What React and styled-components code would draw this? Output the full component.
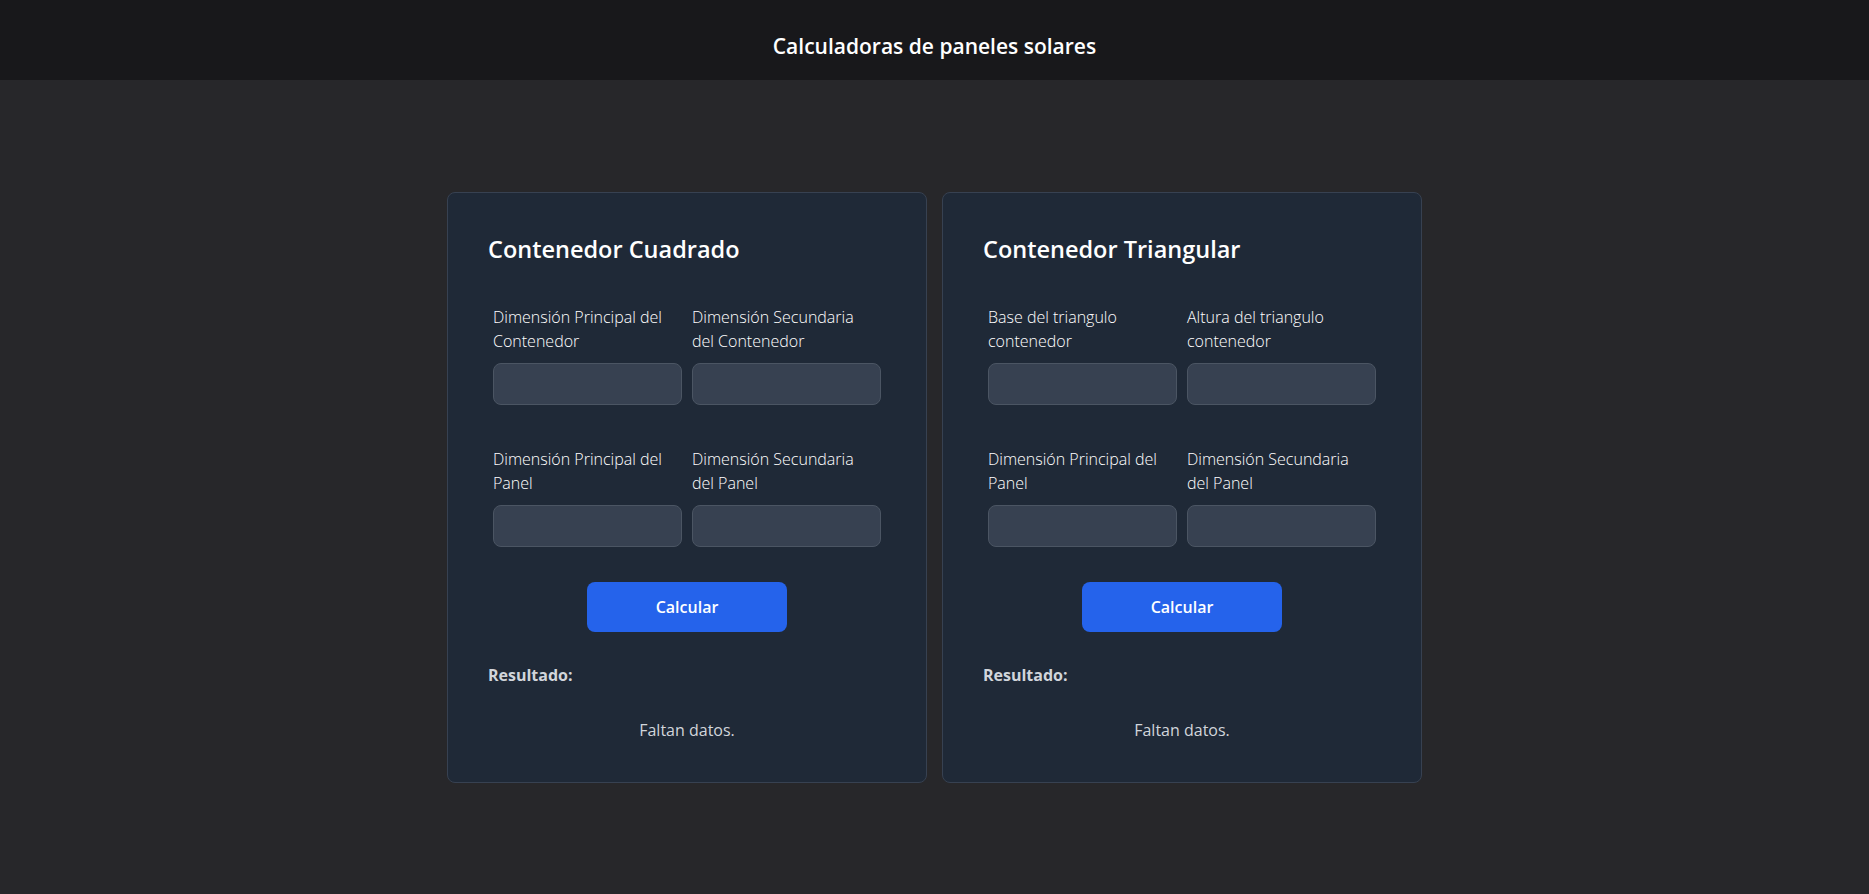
import React, { useState } from "react";
import styled, { createGlobalStyle } from "styled-components";

const GlobalStyle = createGlobalStyle`
  * {
    box-sizing: border-box;
  }

  body {
    margin: 0;
    background: #27272a;
    font-family: "Open Sans", "Noto Sans", sans-serif;
    color: #ffffff;
  }
`;

const Header = styled.header`
  height: 80px;
  padding-top: 12px;
  background: #18181b;
  display: flex;
  align-items: center;
  justify-content: center;
`;

const HeaderTitle = styled.h1`
  margin: 0;
  font-size: 21px;
  font-weight: 600;
  color: #ffffff;
`;

const Main = styled.main`
  display: flex;
  justify-content: center;
  gap: 15px;
  padding-top: 112px;
  padding-bottom: 112px;
`;

const Card = styled.section`
  width: 480px;
  background: #1f2937;
  border: 1px solid #374151;
  border-radius: 8px;
  padding: 40px;
`;

const CardTitle = styled.h2`
  margin: 0 0 40px;
  font-size: 23.5px;
  line-height: 32px;
  font-weight: 600;
  color: #ffffff;
`;

const FieldGrid = styled.div`
  display: grid;
  grid-template-columns: 1fr 1fr;
  column-gap: 10px;
  row-gap: 42px;
  padding: 0 5px;
`;

const Field = styled.label`
  display: flex;
  flex-direction: column;
  gap: 10px;
`;

const LabelText = styled.span`
  font-size: 16px;
  line-height: 24px;
  font-weight: 300;
  color: #ffffff;
  min-height: 48px;
  padding-right: 10px;
`;

const Input = styled.input`
  height: 42px;
  width: 100%;
  background: #374151;
  border: 1px solid #4b5563;
  border-radius: 8px;
  color: #ffffff;
  padding: 0 12px;
  font-family: inherit;
  font-size: 15px;
  outline: none;
`;

const ButtonRow = styled.div`
  display: flex;
  justify-content: center;
  margin-top: 35px;
`;

const Button = styled.button`
  width: 200px;
  height: 50px;
  background: #2563eb;
  border: none;
  border-radius: 8px;
  color: #ffffff;
  font-family: inherit;
  font-size: 16px;
  font-weight: 600;
  cursor: pointer;
`;

const ResultLabel = styled.p`
  margin: 31px 0 0;
  font-size: 16px;
  line-height: 24px;
  font-weight: 700;
  color: #d1d5db;
`;

const ResultText = styled.p`
  margin: 31px 0 0;
  text-align: center;
  font-size: 16px;
  line-height: 24px;
  color: #d1d5db;
`;

function Calculator({ title, fields }) {
  const [values, setValues] = useState(fields.map(() => ""));

  const setValue = (i, v) => {
    const next = [...values];
    next[i] = v;
    setValues(next);
  };

  return (
    <Card>
      <CardTitle>{title}</CardTitle>
      <FieldGrid>
        {fields.map((f, i) => (
          <Field key={f}>
            <LabelText>{f}</LabelText>
            <Input
              type="number"
              value={values[i]}
              onChange={(e) => setValue(i, e.target.value)}
            />
          </Field>
        ))}
      </FieldGrid>
      <ButtonRow>
        <Button>Calcular</Button>
      </ButtonRow>
      <ResultLabel>Resultado:</ResultLabel>
      <ResultText>Faltan datos.</ResultText>
    </Card>
  );
}

export default function App() {
  return (
    <>
      <GlobalStyle />
      <Header>
        <HeaderTitle>Calculadoras de paneles solares</HeaderTitle>
      </Header>
      <Main>
        <Calculator
          title="Contenedor Cuadrado"
          fields={[
            "Dimensión Principal del Contenedor",
            "Dimensión Secundaria del Contenedor",
            "Dimensión Principal del Panel",
            "Dimensión Secundaria del Panel",
          ]}
        />
        <Calculator
          title="Contenedor Triangular"
          fields={[
            "Base del triangulo contenedor",
            "Altura del triangulo contenedor",
            "Dimensión Principal del Panel",
            "Dimensión Secundaria del Panel",
          ]}
        />
      </Main>
    </>
  );
}
